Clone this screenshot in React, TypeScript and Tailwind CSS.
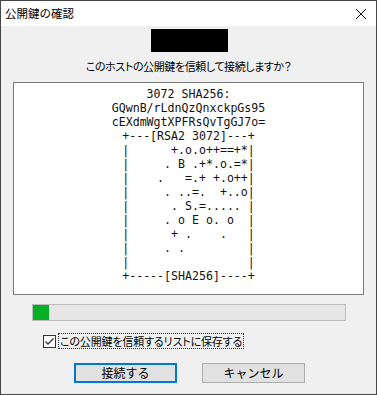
import React from 'react';

const jp = "font-['Yu_Gothic_UI','Noto_Sans_CJK_JP',sans-serif]";

const artLines = [
  '3072 SHA256:',
  'GQwnB/rLdnQzQnxckpGs95',
  'cEXdmWgtXPFRsQvTgGJ7o=',
  '+---[RSA2 3072]---+',
  '|      +.o.o++==+*|',
  '|     . B .+*.o.=*|',
  '|    .   =.+ +.o++|',
  '|     . ..=.  +..o|',
  '|      . S.=..... |',
  '|     . o E o. o  |',
  '|      + .    .   |',
  '|     . .         |',
  '|                 |',
  '+-----[SHA256]----+',
];

function CloseIcon() {
  return (
    <svg width="12" height="12" viewBox="0 0 12 12" fill="none">
      <path d="M1 1 L11 11 M11 1 L1 11" stroke="#111" strokeWidth="1" />
    </svg>
  );
}

export default function App() {
  return (
    <div className="w-[377px] h-[395px] border border-[#464646] flex flex-col bg-[#f0f0f0] text-black">
      {/* title bar */}
      <div className="h-[25px] bg-white flex items-center justify-between pl-[4px] pr-[9px]">
        <span className={`${jp} text-[11.5px] leading-none`}>公開鍵の確認</span>
        <CloseIcon />
      </div>

      <div className="flex-1 flex flex-col">
        <div className="ml-[150px] mt-[3px] w-[77px] h-[23px] bg-black" />

        <p className={`${jp} text-[11px] leading-[16px] mt-[6px] text-center tracking-[-0.4px] [font-feature-settings:'palt']`}>
          このホストの公開鍵を信頼して接続しますか？
        </p>

        <div className="ml-[12px] mt-[8px] w-[351px] h-[213px] bg-white border border-[#7a7a7a] pt-[4px]">
          <pre className="font-['DejaVu_Sans_Mono',monospace] text-[11.6px] leading-[14px] text-center text-[#111]">
            {artLines.join('\n')}
          </pre>
        </div>

        <div className="ml-[31px] mt-[9px] w-[314px] h-[17px] border border-[#bcbcbc] bg-[#e6e6e6]">
          <div className="w-[16px] h-full bg-[#06b025]" />
        </div>

        <div className="ml-[42px] mt-[12px] flex items-center gap-[2px]">
          <div className="w-[13px] h-[13px] border border-[#333] bg-white flex items-center justify-center">
            <svg width="11" height="11" viewBox="0 0 11 11" fill="none">
              <path d="M1.5 5.5 L4 8 L9.5 2.5" stroke="#333" strokeWidth="1.3" />
            </svg>
          </div>
          <span className={`${jp} text-[11px] leading-[14px] px-[1px] border border-dotted border-[#333] tracking-[-0.15px] [font-feature-settings:'palt']`}>
            この公開鍵を信頼するリストに保存する
          </span>
        </div>

        <div className="ml-[73px] mt-[14px] flex gap-[25px]">
          <button className={`${jp} w-[103px] h-[20px] border-2 border-[#0078d7] bg-[#e1e1e1] text-[12px] leading-none`}>
            接続する
          </button>
          <button className={`${jp} w-[103px] h-[20px] border border-[#adadad] bg-[#e1e1e1] text-[12px] leading-none`}>
            キャンセル
          </button>
        </div>
      </div>
    </div>
  );
}
